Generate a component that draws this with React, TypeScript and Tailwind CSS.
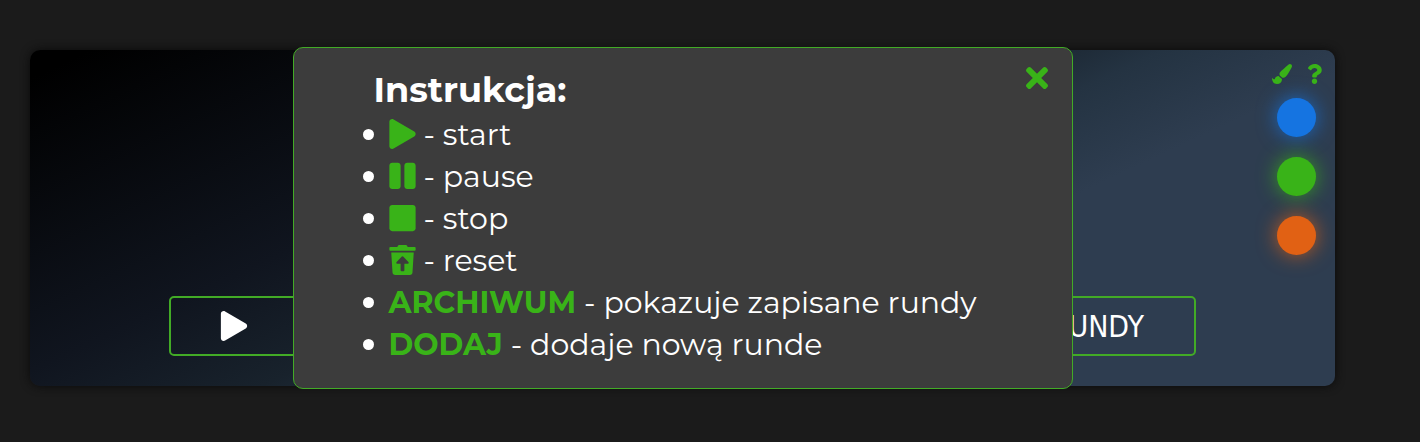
import type { ReactNode } from "react";
import {
  FaPaintBrush,
  FaPause,
  FaPlay,
  FaQuestion,
  FaStop,
  FaTimes,
  FaTrashRestore,
} from "react-icons/fa";

const themes = [
  { name: "Niebieski", style: "bg-[#1574e1] shadow-[0_0_20px_#1574e1cc]" },
  { name: "Zielony", style: "bg-[#39b318] shadow-[0_0_20px_#39b318cc]" },
  { name: "Pomarańczowy", style: "bg-[#e16114] shadow-[0_0_20px_#e16114cc]" },
];

const actionStyle =
  "flex h-[60px] items-center rounded-[5px] border-2 border-[#42ab26] text-[30px] text-white";

const listIcon = "h-[30px] w-[27px]";

function Item({ label, children }: { label: ReactNode; children: ReactNode }) {
  return (
    <li className="flex h-[42px] items-center before:mr-[15px] before:size-[11px] before:rounded-full before:bg-white">
      <span className="mr-2 font-bold text-[#39b318]">{label}</span>
      {children}
    </li>
  );
}

function Instructions() {
  return (
    <section
      role="dialog"
      aria-labelledby="instructions-title"
      className="relative w-full max-w-[780px] rounded-[10px] border border-[#42ab26] bg-[#3c3c3c] pt-[18px] pr-6 pb-[23px] pl-[69px] font-['Montserrat','Inter',sans-serif] text-[30px] text-white"
    >
      <button
        type="button"
        aria-label="Zamknij"
        className="absolute top-[14px] right-6 text-[#39b318]"
      >
        <FaTimes className="h-8 w-[22px]" />
      </button>
      <h1
        id="instructions-title"
        className="pl-[11px] text-[35px] leading-[47px] font-bold"
      >
        Instrukcja:
      </h1>
      <ul>
        <Item label={<FaPlay className={listIcon} />}>- start</Item>
        <Item label={<FaPause className={listIcon} />}>- pause</Item>
        <Item label={<FaStop className={listIcon} />}>- stop</Item>
        <Item label={<FaTrashRestore className={listIcon} />}>- reset</Item>
        <Item label="ARCHIWUM">- pokazuje zapisane rundy</Item>
        <Item label="DODAJ">- dodaje nową runde</Item>
      </ul>
    </section>
  );
}

export default function App() {
  return (
    <main className="min-h-screen bg-[#1b1b1b] pt-[50px] pr-[85px] pb-14 pl-[30px] font-['DejaVu_Sans_Condensed','DejaVu_Sans',sans-serif]">
      <div className="relative flex min-h-[336px] flex-col justify-between rounded-[10px] bg-[linear-gradient(155deg,#000000_3%,#10151f_34%,#18222c_47%,#243342_56%,#2e3d50_67%)] pt-[14px] pb-[30px] shadow-[0_0_10px_#0a0a0a]">
        <div className="flex flex-col items-end gap-[14px] pr-[13px]">
          <div className="flex gap-[15px] text-[20px] text-[#39b318]">
            <button type="button" aria-label="Zmień kolor">
              <FaPaintBrush />
            </button>
            <button type="button" aria-label="Instrukcja">
              <FaQuestion className="h-5 w-[15px]" />
            </button>
          </div>
          <div className="flex flex-col gap-5 pr-[6px]">
            {themes.map((theme) => (
              <button
                key={theme.name}
                type="button"
                aria-label={theme.name}
                className={`size-[39px] rounded-full ${theme.style}`}
              />
            ))}
          </div>
        </div>
        <div className="flex justify-between px-[139px]">
          <button
            type="button"
            aria-label="Start"
            className={`${actionStyle} px-12`}
          >
            <FaPlay />
          </button>
          <button type="button" className={`${actionStyle} px-[50px]`}>
            RUNDY
          </button>
        </div>
        <div className="absolute inset-0 flex items-center justify-center">
          <Instructions />
        </div>
      </div>
    </main>
  );
}
